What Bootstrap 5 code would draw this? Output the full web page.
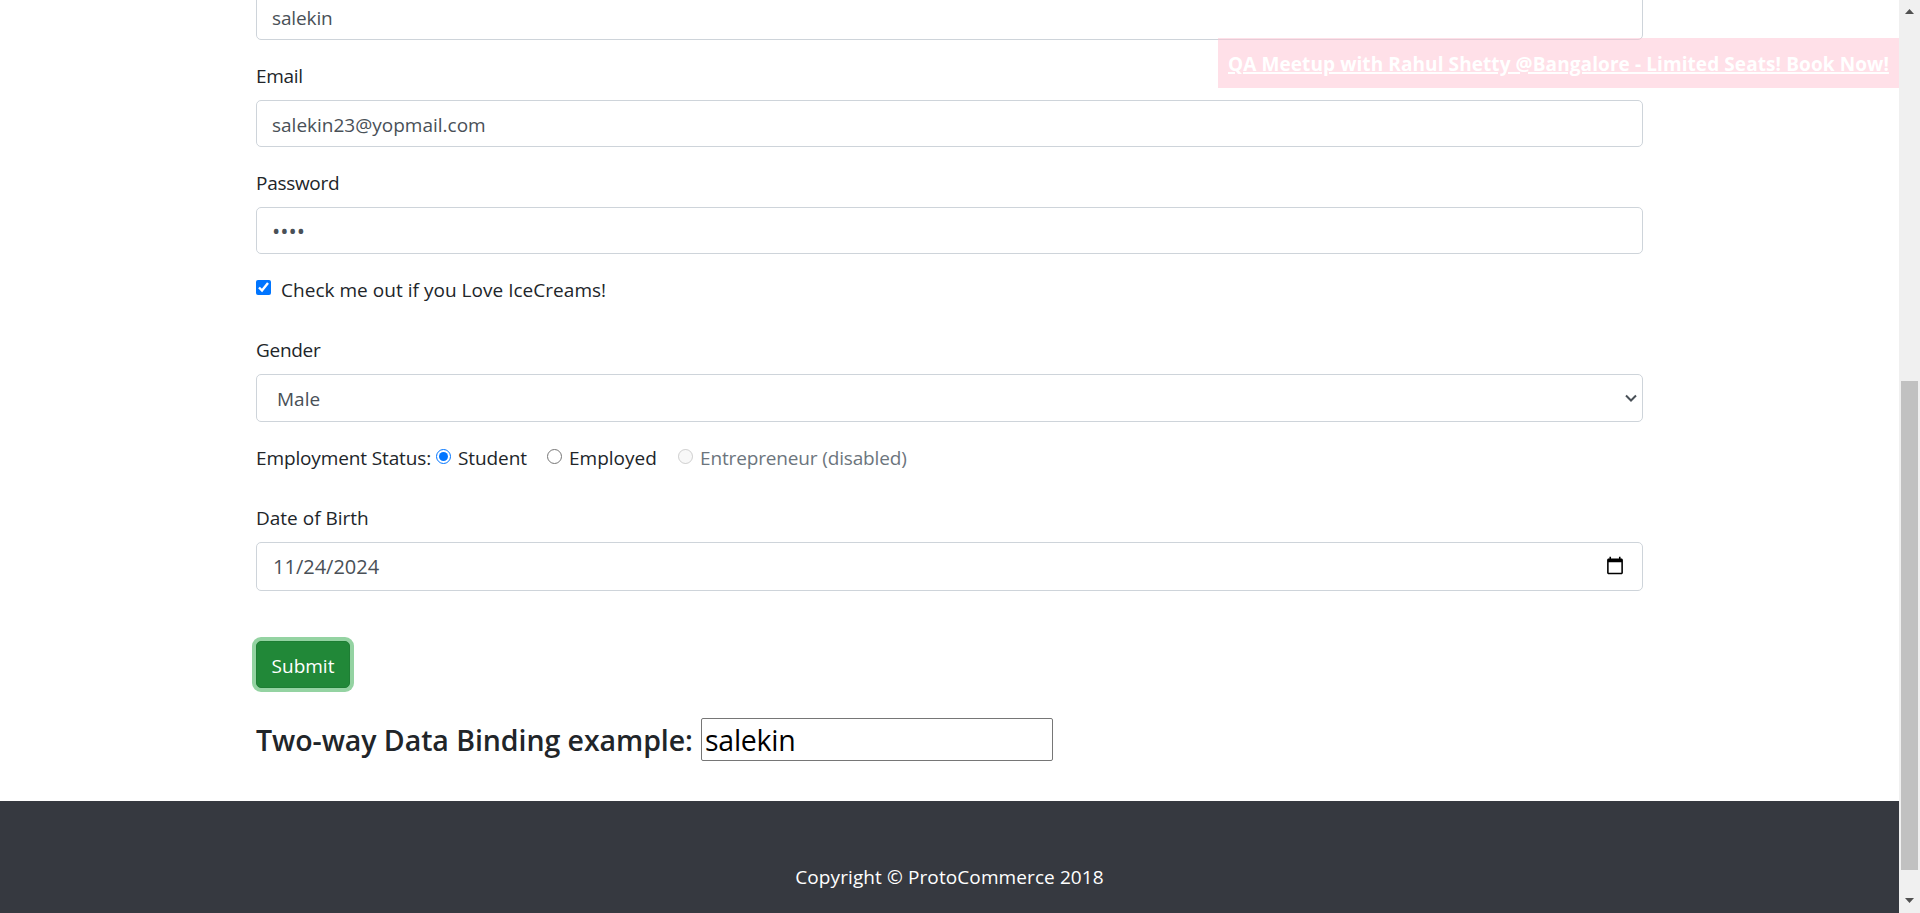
<!DOCTYPE html>
<html lang="en">
<head>
<meta charset="utf-8">
<meta name="viewport" content="width=device-width, initial-scale=1">
<title>ProtoCommerce</title>
<link rel="stylesheet" href="https://cdn.jsdelivr.net/npm/bootstrap@5.3.0/dist/css/bootstrap.min.css">
<style>
html,body{height:100%;overflow:hidden}
body{font-family:"Open Sans","Noto Sans",sans-serif;font-size:19px;line-height:30px;color:#212529;background:#fff}
.page{width:1899px;height:913px}
.wrap{width:1387px;margin-left:256px}
.field{margin-bottom:20px}
.field label{display:block;height:30px;margin-bottom:10px;padding-top:1px}
.field.snug label{margin-bottom:9px;padding-top:0}
.line{height:30px;white-space:nowrap}
.form-control,.form-control:focus{height:47px;padding:2px 15px 0;font-size:19px;line-height:30px;color:#495057;border:1px solid #ced4da;border-radius:5px;background:#fff;box-shadow:none}
.top-field{margin-top:-7px}
.form-control.secret{font-size:22px;letter-spacing:0;padding:0 15px 1px}
input[type=checkbox],input[type=radio]{width:15px;height:15px;margin:0 0 4px;accent-color:#0075ff;flex:none}
.pick{height:48px;position:relative}
.pick .form-control{height:48px;padding:1px 20px 0;appearance:none}
.pick svg{position:absolute;right:6px;top:20px}
.form-control.date-box{height:49px;padding:0 16px;font-size:20px}
.form-control.date-box::-webkit-calendar-picker-indicator{width:20px;height:20px;margin-right:-1px;margin-bottom:2px}
.ls-tight{letter-spacing:-.3px}
.ls-snug{letter-spacing:-.13px}
.ice-row{margin-top:21px}
.ice-row input[type=checkbox]{margin-bottom:5px}
.ice-row label{margin-left:10px;letter-spacing:.03px}
.gender-label{margin-top:30px}
.status-row{margin-top:21px}
.st-label{width:180px}
.st-student{margin-left:7px;width:89px;letter-spacing:-.1px}
.st-employed{margin-left:7px;width:109px}
.st-ent{margin-left:7px;color:#6c757d;letter-spacing:-.15px}
.dob{margin-top:30px}
.btn.send{display:block;width:94px;height:47px;margin-top:50px;padding:2px 0 0;border:1px solid #1e7e34;border-radius:5px;background:#218838;color:#fff;font-size:19px;line-height:30px;box-shadow:0 0 0 4px #94d3a2}
.bind-title{height:43px;font-size:28.5px;font-weight:600;line-height:43px;margin:30px 0 0;white-space:nowrap}
.bind-title span{width:445px;letter-spacing:-.06px;padding-top:1px}
.bind-input{width:352px;height:43px;border:1px solid #767676;border-radius:2px;padding:1px 3px 0;font-size:28.5px;letter-spacing:-.25px;color:#000}
.foot{height:112px;background:#363940;color:#fff;padding-top:61px;letter-spacing:.1px}
.promo{position:absolute;left:1218px;top:38px;width:681px;height:50px;background:rgba(255,193,209,.5);color:#fff;font-weight:700;line-height:52px;padding-left:10px;letter-spacing:.09px;white-space:nowrap}
.promo a{color:#fff;text-decoration-thickness:2px;text-underline-offset:1px}
.bar{width:21px;height:913px;background:#f0f0f0}
.bar svg{margin-left:-1px}
.thumb{width:17px;height:489px;margin-top:367px;background:#c1c1c1}
.up{margin-top:9px}
.down{margin-top:28px}
</style>
</head>
<body>
<div class="d-flex">
  <div class="page d-flex flex-column position-relative">
    <form class="wrap flex-grow-1">
      <div class="field"><input class="form-control top-field ls-snug" type="text" value="salekin"></div>
      <div class="field"><label class="ls-tight" for="email">Email</label><input id="email" class="form-control" type="text" value="salekin23@yopmail.com"></div>
      <div class="field"><label class="ls-tight" for="pw">Password</label><input id="pw" class="form-control secret" type="password" value="abcd"></div>
      <div class="line d-flex align-items-center ice-row"><input id="ice" type="checkbox" checked><label for="ice">Check me out if you Love IceCreams!</label></div>
      <div class="field snug"><label class="ls-tight gender-label" for="gender">Gender</label>
        <div class="pick"><select id="gender" class="form-control"><option>Male</option></select>
          <svg width="12" height="9" viewBox="0 0 12 9" fill="none" stroke="#495057" stroke-width="2"><path d="M1 1.5 6 6.5 11 1.5"/></svg></div>
      </div>
      <div class="line d-flex align-items-center status-row">
        <span class="ls-snug st-label">Employment Status:</span>
        <input type="radio" name="s" id="s1" checked><label for="s1" class="st-student">Student</label>
        <input type="radio" name="s" id="s2"><label for="s2" class="st-employed">Employed</label>
        <input type="radio" name="s" id="s3" disabled><label for="s3" class="st-ent">Entrepreneur (disabled)</label>
      </div>
      <div class="field snug dob"><label for="dob">Date of Birth</label><input id="dob" class="form-control date-box" type="date" value="2024-11-24"></div>
      <button type="button" class="btn send">Submit</button>
      <h3 class="bind-title d-flex"><span>Two-way Data Binding example:</span><input class="bind-input" type="text" value="salekin"></h3>
    </form>
    <footer class="foot text-center">Copyright © ProtoCommerce 2018</footer>
    <div class="promo"><a href="#">QA Meetup with Rahul Shetty @Bangalore - Limited Seats! Book Now!</a></div>
  </div>
  <div class="bar d-flex flex-column align-items-center">
    <svg width="9" height="5" viewBox="0 0 9 5" class="up"><path d="M0 5 4.5 0 9 5z" fill="#505050"/></svg>
    <div class="thumb"></div>
    <svg width="9" height="5" viewBox="0 0 9 5" class="down"><path d="M0 0h9L4.5 5z" fill="#505050"/></svg>
  </div>
</div>
<script src="https://cdn.jsdelivr.net/npm/bootstrap@5.3.0/dist/js/bootstrap.bundle.min.js"></script>
</body>
</html>
